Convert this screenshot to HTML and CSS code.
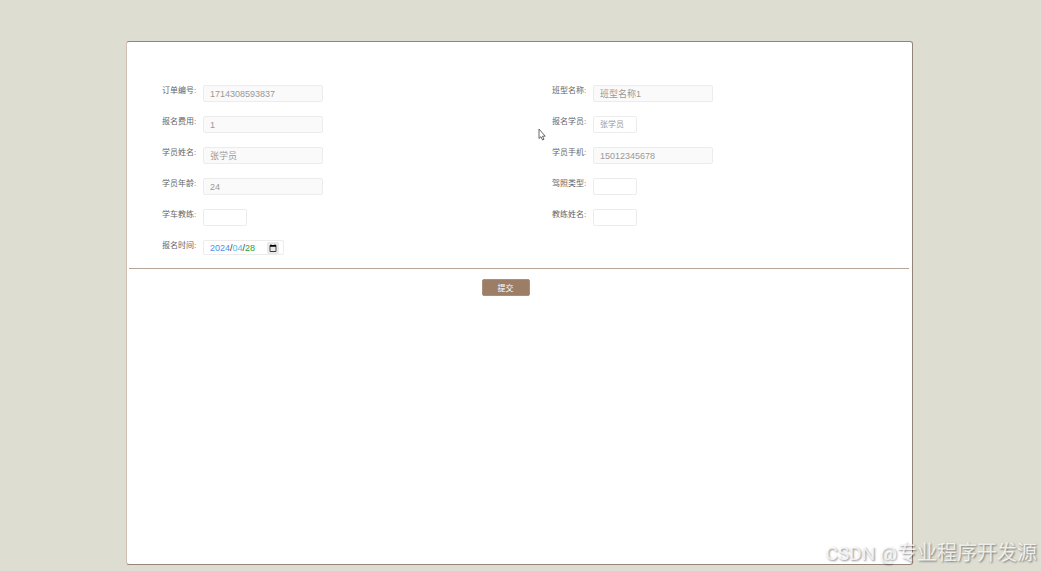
FILE: index.html
```html
<!DOCTYPE html>
<html lang="zh-CN">
  <head>
    <meta charset="UTF-8" />
    <meta name="viewport" content="width=device-width, initial-scale=1.0" />
    <title>报名</title>
    <link rel="stylesheet" href="styles.css">
  </head>
  <body>
    <main class="panel">
        <form class="form" id="form">
            <div class="fields">
                <div class="item">
                    <label for="orderNo">订单编号:</label>
                    <input type="text" id="orderNo" value="1714308593837" readonly>
                </div>
                <div class="item">
                    <label for="className">班型名称:</label>
                    <input type="text" id="className" value="班型名称1" readonly>
                </div>
                <div class="item">
                    <label for="fee">报名费用:</label>
                    <input type="text" id="fee" value="1" readonly>
                </div>
                <div class="item">
                    <label for="student">报名学员:</label>
                    <select id="student">
                        <option>张学员</option>
                    </select>
                </div>
                <div class="item">
                    <label for="studentName">学员姓名:</label>
                    <input type="text" id="studentName" value="张学员" readonly>
                </div>
                <div class="item">
                    <label for="phone">学员手机:</label>
                    <input type="text" id="phone" value="15012345678" readonly>
                </div>
                <div class="item">
                    <label for="age">学员年龄:</label>
                    <input type="text" id="age" value="24" readonly>
                </div>
                <div class="item">
                    <label for="licence">驾照类型:</label>
                    <select id="licence">
                        <option></option>
                    </select>
                </div>
                <div class="item">
                    <label for="coach">学车教练:</label>
                    <select id="coach">
                        <option></option>
                    </select>
                </div>
                <div class="item">
                    <label for="coachName">教练姓名:</label>
                    <select id="coachName">
                        <option></option>
                    </select>
                </div>
                <div class="item">
                    <label for="date">报名时间:</label>
                    <input type="date" id="date" value="2024-04-28">
                </div>
            </div>
            <div class="actions">
                <button class="btn" type="button">提交</button>
            </div>
        </form>
    </main>

    <svg class="cursor" viewBox="0 0 8 13" aria-hidden="true">
        <path d="M1 1v9.500l2-1.800 1.500 3.300 1.500-.7-1.500-3.100h2.700z" fill="#fff" stroke="#444" stroke-width=".8"/>
    </svg>
    <div class="watermark"><span class="brand">CSDN @</span>专业程序开发源</div>
  </body>
</html>
```

FILE: styles.css
```css
* {
  margin: 0;
  padding: 0;
  box-sizing: border-box;
}

body {
  min-height: 100vh;
  padding: 41px 128px 6px 126px;
  background: #deddd1;
  font-family: "Liberation Sans", "Noto Sans CJK SC", sans-serif;
  font-size: 9px;
  color: #666;
  display: flex;
}

.panel {
  flex: 1;
  padding: 43px 3px 0 2px;
  background: #fff;
  border: 1px solid #94857a;
  border-left-color: #cfbfb2;
  border-radius: 3px;
}

.fields {
  display: grid;
  grid-template-columns: 1fr 1fr;
  grid-auto-rows: 17px;
  row-gap: 14px;
  padding-bottom: 11px;
  border-bottom: 1px solid #b8a596;
}

.item {
  display: flex;
  padding-left: 33px;
}

.item label {
  width: 41px;
  font-size: 8px;
  line-height: 12px;
  white-space: nowrap;
}

.item input, .item select {
  height: 17px;
  padding: 0 6px;
  border: 1px solid #ececec;
  border-radius: 2px;
  background: #fff;
  color: #999;
  font-family: inherit;
  font-size: 9px;
  outline: none;
}

.item input[type="text"] {
  width: 120px;
  background: #fafafa;
}

.item select {
  width: 44px;
  font-size: 8px;
  appearance: none;
}

.item input[type="date"] {
  width: 81px;
  height: 15px;
  padding-right: 4px;
  color: #333;
}

/* year / month / day, the separators fill the columns left free */
::-webkit-datetime-edit-fields-wrapper {
  display: inline-grid;
  grid-template-columns: repeat(5, auto);
}

::-webkit-datetime-edit-text {
  grid-row: 1;
  padding: 0;
}

::-webkit-datetime-edit-year-field {
  grid-row: 1;
  grid-column: 1;
  padding: 0;
  color: #4a90e8;
}

::-webkit-datetime-edit-month-field {
  grid-row: 1;
  grid-column: 3;
  padding: 0;
  color: #45bdf0;
}

::-webkit-datetime-edit-day-field {
  grid-row: 1;
  grid-column: 5;
  padding: 0;
  color: #28a428;
}

::-webkit-calendar-picker-indicator {
  width: 8px;
  height: 8px;
  padding: 2px;
  margin: 0;
  box-sizing: content-box;
  background-color: #e9e9e9;
  border-radius: 2px;
}

.actions {
  display: flex;
  justify-content: center;
  padding: 10px 27px 0 0;
}

.btn {
  width: 48px;
  height: 17px;
  border: 1px solid #a98e78;
  border-radius: 2px;
  background: #9c7e66;
  color: #fff;
  font-family: inherit;
  font-size: 8px;
  cursor: pointer;
}

.cursor {
  position: absolute;
  top: 128px;
  left: 538px;
  width: 8px;
  height: 13px;
}

.watermark {
  position: absolute;
  right: 4px;
  bottom: 2px;
  font-family: "Noto Sans CJK SC", sans-serif;
  font-size: 20px;
  line-height: 30px;
  color: rgba(255, 255, 255, .8);
  text-shadow: 1px 1px 2px rgba(0, 0, 0, .45);
}

.watermark .brand {
  font-family: Roboto, sans-serif;
  font-size: 19px;
}
```
